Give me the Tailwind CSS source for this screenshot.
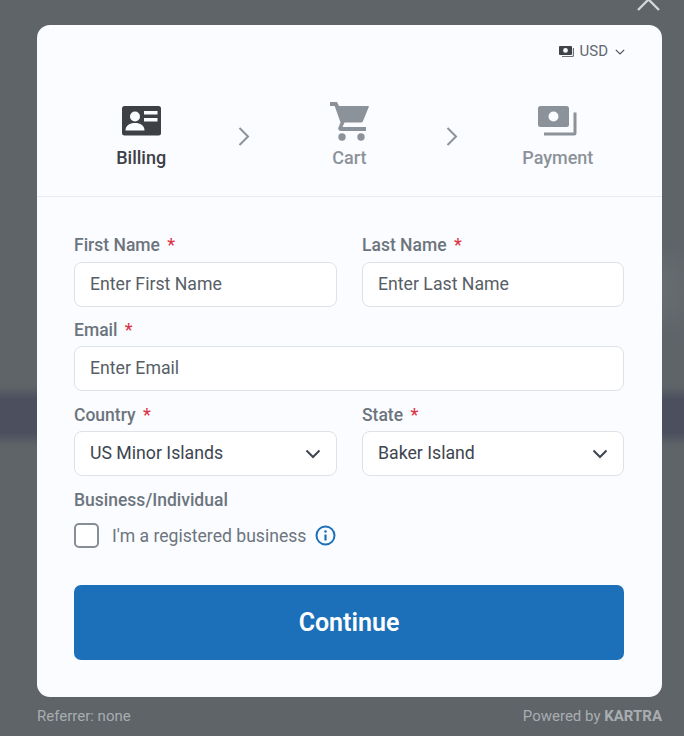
<!DOCTYPE html>
<html lang="en">
<head>
<meta charset="utf-8">
<title>Checkout</title>
<script src="https://cdn.jsdelivr.net/npm/@tailwindcss/browser@4"></script>
</head>
<body class="font-['Roboto',sans-serif]">
<div class="relative w-[684px] h-[736px] overflow-hidden bg-[#5e6468] pt-[25px] pl-[37px]">
  <!-- blurred page behind the modal -->
  <div class="absolute left-[-20px] top-[393px] w-[724px] h-[46px] bg-[#4c4f5e] blur-[4px]"></div>
  <div class="absolute left-[640px] top-[260px] w-[44px] h-[60px] bg-[#676c70] blur-md"></div>

  <svg class="absolute left-[636px] top-[-12px]" width="25" height="25" viewBox="0 0 25 25" fill="none" stroke="#d4d6d8" stroke-width="2.4"><path d="M2 22 12.5 11.5 23 22M2 1 12.5 11.5 23 1"/></svg>

  <div class="relative w-[625px] h-[672px] bg-[#fbfcff] rounded-[13px]">
    <div class="flex justify-end items-center h-[50px] pr-[37px] pt-[3px] text-[#5f6872] text-[15px] leading-none">
      <svg class="mr-[6px]" width="15" height="13" viewBox="0 0 15 13"><path fill="#3f4247" fill-rule="evenodd" d="M1 1h11a1 1 0 0 1 1 1v7a1 1 0 0 1-1 1H1a1 1 0 0 1-1-1V2a1 1 0 0 1 1-1Zm5.500 2a2.400 2.400 0 1 0 0 4.800a2.400 2.400 0 0 0 0-4.800Z"/><path fill="none" stroke="#6b7178" stroke-width="1.200" d="M14.400 3v7.500a1 1 0 0 1-1 1H3"/></svg>
      <span>USD</span>
      <svg class="ml-[7px]" width="10" height="6" viewBox="0 0 10 6" fill="none" stroke="#4b5159" stroke-width="1.200"><path d="M.8.8 5 5 9.200.8"/></svg>
    </div>

    <div class="flex h-[122px] border-b border-[#e8ebf0]">
      <div class="flex-1 flex flex-col items-center pt-[31px]">
        <svg width="39" height="30" viewBox="0 0 39 30"><rect width="39" height="29.500" rx="2.500" fill="#3d4045"/><circle cx="13" cy="10.500" r="5" fill="#fbfcff"/><path fill="#fbfcff" d="M3.500 24.500c0-5 4-7.500 9.500-7.500s9.500 2.500 9.500 7.500Z"/><rect x="22" y="5" width="13.500" height="3.500" fill="#fbfcff"/><rect x="22" y="12" width="13.500" height="3.500" fill="#fbfcff"/></svg>
        <span class="mt-[11px] text-[18px] leading-[21px] font-medium text-[#3d4045]">Billing</span>
      </div>
      <div class="w-0 flex justify-center pt-[52px] -translate-x-[1px]">
        <svg class="shrink-0" width="12" height="19" viewBox="0 0 12 19" fill="none" stroke="#8c9299" stroke-width="2"><path d="M1.500 1 10 9.500 1.500 18"/></svg>
      </div>
      <div class="flex-1 flex flex-col items-center pt-[27px]">
        <svg width="39" height="39" viewBox="0 0 39 39"><path fill="#8c9299" d="M0 0h7l2 4h29c.6 0 1 .5.800 1.100L33 19c-.4 1-1.300 1.500-2.300 1.500H14.500L12.500 25H36v4H11c-2 0-3.400-1.800-2.500-3.700l2-4.800L4.700 4H0Z"/><circle cx="12" cy="35" r="3.700" fill="#8c9299"/><circle cx="31" cy="35" r="3.700" fill="#8c9299"/></svg>
        <span class="mt-[6px] text-[18px] leading-[21px] font-medium text-[#8c9299]">Cart</span>
      </div>
      <div class="w-0 flex justify-center pt-[52px] -translate-x-[2px]">
        <svg class="shrink-0" width="12" height="19" viewBox="0 0 12 19" fill="none" stroke="#8c9299" stroke-width="2"><path d="M1.500 1 10 9.500 1.500 18"/></svg>
      </div>
      <div class="flex-1 flex flex-col items-center pt-[31px]">
        <svg width="39" height="30" viewBox="0 0 39 30"><path fill="#8c9299" fill-rule="evenodd" d="M2.500 0h26a2.500 2.500 0 0 1 2.500 2.500v16a2.500 2.500 0 0 1-2.500 2.500h-26A2.500 2.500 0 0 1 0 18.500v-16A2.500 2.500 0 0 1 2.500 0ZM15.500 5.500a5 5 0 1 0 0 10 5 5 0 0 0 0-10Z"/><path fill="none" stroke="#8c9299" stroke-width="3" d="M37 6.500v20.500a1 1 0 0 1-1 1H6"/></svg>
        <span class="mt-[11px] text-[18px] leading-[21px] font-medium text-[#8c9299]">Payment</span>
      </div>
    </div>

    <form class="pl-[37px] pr-[38px] pt-[37px]">
      <div class="grid grid-cols-[263px_262px] gap-x-[25px]">
        <div>
          <label class="block h-[28px] pt-[1px] text-[17.500px] leading-[21px] font-medium text-[#6c757d]">First Name <span class="ml-[3px] text-[#dc3545]">*</span></label>
          <input placeholder="Enter First Name" class="w-full h-[45px] px-[15px] pb-[1px] bg-white border border-[#dee2e6] rounded-[8px] text-[17.700px] text-[#3d4550] placeholder:text-[#575e66]">
        </div>
        <div>
          <label class="block h-[28px] pt-[1px] text-[17.500px] leading-[21px] font-medium text-[#6c757d]">Last Name <span class="ml-[3px] text-[#dc3545]">*</span></label>
          <input placeholder="Enter Last Name" class="w-full h-[45px] px-[15px] pb-[1px] bg-white border border-[#dee2e6] rounded-[8px] text-[17.700px] text-[#3d4550] placeholder:text-[#575e66]">
        </div>
      </div>
      <div class="mt-[12px]">
        <label class="block h-[27px] pt-[1px] text-[17.500px] leading-[21px] font-medium text-[#6c757d]">Email <span class="ml-[3px] text-[#dc3545]">*</span></label>
        <input placeholder="Enter Email" class="w-full h-[45px] px-[15px] pb-[1px] bg-white border border-[#dee2e6] rounded-[8px] text-[17.700px] text-[#3d4550] placeholder:text-[#575e66]">
      </div>
      <div class="mt-[13px] grid grid-cols-[263px_262px] gap-x-[25px]">
        <div>
          <label class="block h-[27px] pt-[1px] text-[17.500px] leading-[21px] font-medium text-[#6c757d]">Country <span class="ml-[3px] text-[#dc3545]">*</span></label>
          <div class="flex items-center justify-between h-[45px] pl-[15px] pr-[15px] bg-white border border-[#dee2e6] rounded-[8px] text-[17.700px] text-[#3d4550]">
            <span>US Minor Islands</span>
            <svg width="16" height="10" viewBox="0 0 16 10" fill="none" stroke="#3d4550" stroke-width="2"><path d="M1.500 1.500 8 8l6.500-6.500"/></svg>
          </div>
        </div>
        <div>
          <label class="block h-[27px] pt-[1px] text-[17.500px] leading-[21px] font-medium text-[#6c757d]">State <span class="ml-[3px] text-[#dc3545]">*</span></label>
          <div class="flex items-center justify-between h-[45px] pl-[15px] pr-[15px] bg-white border border-[#dee2e6] rounded-[8px] text-[17.700px] text-[#3d4550]">
            <span>Baker Island</span>
            <svg width="16" height="10" viewBox="0 0 16 10" fill="none" stroke="#3d4550" stroke-width="2"><path d="M1.500 1.500 8 8l6.500-6.500"/></svg>
          </div>
        </div>
      </div>
      <div class="mt-[14px] text-[17.500px] leading-[21px] font-medium text-[#6c757d]">Business/Individual</div>
      <div class="mt-[12px] flex items-center h-[25px]">
        <span class="w-[25px] h-[25px] bg-white border-2 border-[#868e96] rounded-[5px]"></span>
        <span class="ml-[13px] pt-[2px] text-[17.600px] text-[#6c757d]">I'm a registered business</span>
        <svg class="ml-[9px]" width="21" height="21" viewBox="0 0 21 21" fill="none"><circle cx="10.500" cy="10.500" r="9" stroke="#1c6fb9" stroke-width="2"/><circle cx="10.500" cy="6.500" r="1.300" fill="#1c6fb9"/><path d="M10.500 9.500v6" stroke="#1c6fb9" stroke-width="2.200"/></svg>
      </div>
      <button type="button" class="mt-[37px] w-[550px] h-[75px] bg-[#1c6fb9] rounded-[7px] text-white text-[25px] font-semibold">Continue</button>
    </form>
  </div>

  <div class="flex justify-between w-[625px] mt-[10px] text-[15px] leading-[18px] text-[#a9adb1]">
    <span>Referrer: none</span>
    <span>Powered by <b class="font-bold">KARTRA</b></span>
  </div>
</div>
</body>
</html>
